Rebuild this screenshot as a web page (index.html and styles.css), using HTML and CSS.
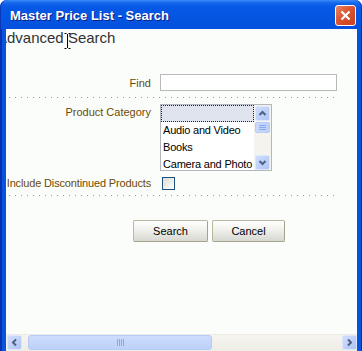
FILE: index.html
```html
<!DOCTYPE html>
<html lang="en">

<head>
    <meta charset="UTF-8">
    <meta name="viewport" content="width=device-width, initial-scale=1.0">
    <title>Master Price List - Search</title>
    <link rel="stylesheet" href="styles.css">
</head>

<body>

    <div class="window">
        <div class="title-bar">
            <span class="title">Master Price List - Search</span>
            <button class="close-button" aria-label="Close">
                <svg width="13" height="13" viewBox="0 0 13 13">
                    <path d="M2.5 2.5 L10.5 10.5 M10.5 2.5 L2.5 10.5" stroke="#fff" stroke-width="2.2" />
                </svg>
            </button>
        </div>

        <div class="frame">
            <div class="client">
                <div class="content">
                    <h1 class="page-title">Advanced Search</h1>
                    <svg class="cursor" width="7" height="16" viewBox="0 0 7 16">
                        <path d="M0.5 0.5 H2.5 M4.5 0.5 H6.5 M3.5 1 V15 M0.5 15.5 H2.5 M4.5 15.5 H6.5" stroke="#000" stroke-width="1" fill="none" />
                    </svg>

                    <div class="form-row first">
                        <label class="field-label" for="find">Find</label>
                        <input type="text" class="text-input" id="find">
                    </div>

                    <div class="separator"></div>

                    <div class="form-row top">
                        <label class="field-label">Product Category</label>
                        <div class="listbox">
                            <div class="list-items">
                                <div class="list-item selected"></div>
                                <div class="list-item">Audio and Video</div>
                                <div class="list-item">Books</div>
                                <div class="list-item">Camera and Photo</div>
                            </div>
                            <div class="vscroll">
                                <div class="scroll-btn">
                                    <svg width="9" height="9" viewBox="0 0 9 9">
                                        <polyline points="1.5,6 4.5,3 7.5,6" stroke="#4d6185" stroke-width="2" fill="none" />
                                    </svg>
                                </div>
                                <div class="vthumb">
                                    <span></span><span></span><span></span>
                                </div>
                                <div class="vtrack"></div>
                                <div class="scroll-btn">
                                    <svg width="9" height="9" viewBox="0 0 9 9">
                                        <polyline points="1.5,3 4.5,6 7.5,3" stroke="#4d6185" stroke-width="2" fill="none" />
                                    </svg>
                                </div>
                            </div>
                        </div>
                    </div>

                    <div class="form-row check-row">
                        <label class="field-label long" for="discontinued">Include Discontinued Products</label>
                        <span class="checkbox" id="discontinued"></span>
                    </div>

                    <div class="separator second"></div>

                    <div class="button-row">
                        <button class="push-button search">Search</button>
                        <button class="push-button cancel">Cancel</button>
                    </div>
                </div>

                <div class="hscroll">
                    <div class="scroll-btn">
                        <svg width="9" height="9" viewBox="0 0 9 9">
                            <polyline points="6,1.5 3,4.5 6,7.5" stroke="#4d6185" stroke-width="2" fill="none" />
                        </svg>
                    </div>
                    <div class="hthumb">
                        <span></span><span></span><span></span><span></span>
                    </div>
                    <div class="scroll-btn right">
                        <svg width="9" height="9" viewBox="0 0 9 9">
                            <polyline points="3,1.5 6,4.5 3,7.5" stroke="#4d6185" stroke-width="2" fill="none" />
                        </svg>
                    </div>
                </div>
            </div>
        </div>
    </div>

</body>

</html>
```

FILE: styles.css
```css
body {
    margin: 0;
    background-color: #fff;
    font-family: "Liberation Sans", Arial, sans-serif;
    overflow: hidden;
}

.window {
    width: 362px;
    height: 351px;
    display: flex;
    flex-direction: column;
}

/* Title bar */
.title-bar {
    height: 29px;
    flex-shrink: 0;
    display: flex;
    align-items: flex-start;
    padding: 0 6px 0 10px;
    box-sizing: border-box;
    border-radius: 7px 7px 0 0;
    background: linear-gradient(to bottom, #3b8cf5 0, #1466ec 3px, #0758e6 7px, #0555e2 60%, #0550dc 100%);
    box-shadow: inset 1px 0 #0a38b8, inset -1px 0 #0a38b8;
}

.title {
    margin-top: 8px;
    font-size: 13px;
    line-height: 16px;
    font-weight: bold;
    color: #fff;
    text-shadow: 1px 1px 0 #0a1f80;
}

.close-button {
    margin-left: auto;
    margin-top: 5px;
    width: 21px;
    height: 21px;
    padding: 0;
    border: 1px solid #fff;
    border-radius: 3px;
    background: linear-gradient(135deg, #e88466 0, #dc5430 45%, #c8401c 100%);
    display: flex;
    align-items: center;
    justify-content: center;
}

/* Window frame and client area */
.frame {
    flex: 1;
    min-height: 0;
    display: flex;
    padding: 0 5px 0 6px;
    background-color: #0855dd;
    box-shadow: inset 2px 0 #0a2fb0, inset -1px 0 #0a2fb0;
}

.client {
    flex: 1;
    min-width: 0;
    display: flex;
    flex-direction: column;
    background-color: #fbfdfb;
    overflow: hidden;
}

.content {
    flex: 1;
    position: relative;
}

/* heading starts under the left frame, its first letter is clipped */
.page-title {
    margin: 0 0 0 -9px;
    font-size: 15px;
    line-height: 18px;
    font-weight: normal;
    color: #333;
}

.cursor {
    position: absolute;
    top: 4px;
    left: 58px;
}

/* Form */
.form-row {
    display: grid;
    grid-template-columns: 146px auto;
    column-gap: 8px;
    align-items: center;
}

.form-row.first {
    margin-top: 27px;
}

.form-row.top {
    align-items: start;
}

.form-row.top .field-label {
    padding-top: 1px;
}

.field-label {
    text-align: right;
    padding-right: 1px;
    font-size: 11px;
    line-height: 14px;
    color: #6b4a04;
    white-space: nowrap;
}

.field-label.long {
    letter-spacing: -0.15px;
}

.text-input {
    width: 177px;
    height: 17px;
    box-sizing: border-box;
    margin: 0;
    padding: 0 2px;
    border: 1px solid #b9b9b9;
    background-color: #fff;
}

.separator {
    width: 330px;
    height: 1px;
    margin: 6px 0 6px 3px;
    background-image: linear-gradient(to right, #999 1px, transparent 1px);
    background-size: 6px 1px;
}

.separator.second {
    margin: 5px 0 0 3px;
}

/* Listbox */
.listbox {
    width: 112px;
    height: 67px;
    box-sizing: border-box;
    border: 1px solid #b3b6ba;
    background-color: #fff;
    display: flex;
    overflow: hidden;
}

.list-items {
    flex: 1;
    font-size: 11px;
    line-height: 17px;
    letter-spacing: -0.2px;
    color: #000;
    white-space: nowrap;
    overflow: hidden;
}

.list-item {
    height: 17px;
    padding-left: 2px;
}

.list-item.selected {
    box-sizing: border-box;
    background-color: #dfe4ee;
    border: 1px dotted #10207a;
}

.vscroll {
    width: 17px;
    box-sizing: border-box;
    padding: 1px 1px 0 1px;
    background-color: #f4f3ee;
    display: flex;
    flex-direction: column;
}

.vtrack {
    flex: 1;
}

.scroll-btn {
    width: 15px;
    height: 15px;
    box-sizing: border-box;
    flex-shrink: 0;
    border: 1px solid #dfe7fd;
    border-radius: 2px;
    background: linear-gradient(135deg, #d0defd 0, #bccff8 60%, #aec4f4 100%);
    display: flex;
    align-items: center;
    justify-content: center;
}

.vthumb {
    height: 11px;
    margin-top: 1px;
    box-sizing: border-box;
    border: 1px solid #b7cbf6;
    border-radius: 2px;
    background: linear-gradient(to right, #cad9fc, #bcd0f9);
    display: flex;
    flex-direction: column;
    align-items: center;
    justify-content: center;
    gap: 1px;
}

.vthumb span {
    width: 7px;
    height: 1px;
    background-color: #8aa8ec;
}

/* Checkbox */
.check-row {
    margin-top: 5px;
}

.checkbox {
    width: 13px;
    height: 13px;
    margin-left: 2px;
    box-sizing: border-box;
    border: 1px solid #1c5180;
    background: linear-gradient(135deg, #dcdcd5 0, #f4f4f0 70%, #fff 100%);
}

/* Buttons */
.button-row {
    display: flex;
    gap: 4px;
    margin-top: 24px;
    padding-left: 127px;
}

.push-button {
    height: 22px;
    padding: 0;
    font-family: "Liberation Sans", Arial, sans-serif;
    font-size: 11px;
    color: #000;
    border: 1px solid #b8b89e;
    border-right-color: #a4a48a;
    border-bottom-color: #a4a48a;
    border-radius: 2px;
    background: linear-gradient(to bottom, #fff 0, #f2f2ee 40%, #d8d8d2 100%);
}

.push-button.search {
    width: 75px;
}

.push-button.cancel {
    width: 73px;
}

/* Horizontal scrollbar */
.hscroll {
    height: 17px;
    flex-shrink: 0;
    box-sizing: border-box;
    border-top: 1px solid #ecebe4;
    background: linear-gradient(to bottom, #f5f4ef, #eeede6);
    display: flex;
    align-items: flex-start;
    padding-left: 1px;
}

.hthumb {
    width: 184px;
    height: 15px;
    margin-left: 6px;
    box-sizing: border-box;
    border: 1px solid #b7cbf6;
    border-radius: 3px;
    background: linear-gradient(to bottom, #cedcfd, #bdd0f9);
    display: flex;
    align-items: center;
    justify-content: center;
    gap: 1px;
}

.hthumb span {
    width: 1px;
    height: 7px;
    background-color: #8aa8ec;
}

.scroll-btn.right {
    margin-left: auto;
}
```
